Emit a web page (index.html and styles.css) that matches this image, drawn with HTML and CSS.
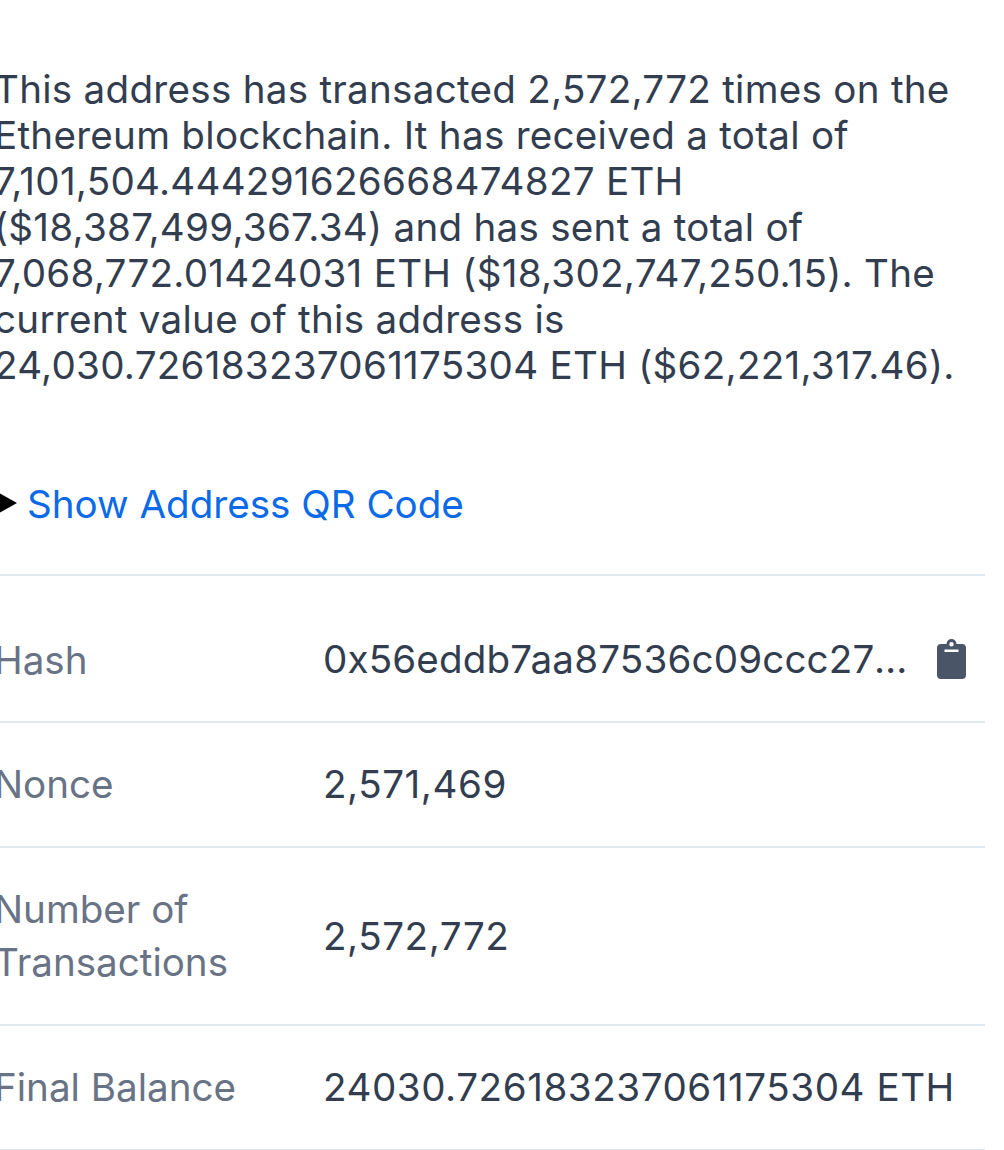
FILE: index.html
```html
<!DOCTYPE html>
<html lang="en">
<head>
    <meta charset="UTF-8">
    <title>Address</title>
    <link rel="stylesheet" href="styles.css">
</head>
<body>
    <div class="wrap">
        <p class="summary">This address has transacted 2,572,772 times on the Ethereum blockchain. It has received a total of 7,101,504.444291626668474827 ETH ($18,387,499,367.34) and has sent a total of 7,068,772.01424031 ETH ($18,302,747,250.15). The current value of this address is 24,030.726183237061175304 ETH ($62,221,317.46).</p>
        <details class="qr">
            <summary><span class="qr-link">Show Address QR Code</span></summary>
        </details>
        <div class="rows">
            <div class="row row-hash">
                <div class="label">Hash</div>
                <div class="value hash">
                    <span class="hash-text">0x56eddb7aa87536c09ccc2793473599fd21a8b17f</span>
                    <svg class="clip" viewBox="0 0 29 40"><path fill-rule="evenodd" d="M14.500 0a5 5 0 0 1 5 5h5.500a4 4 0 0 1 4 4v27a4 4 0 0 1-4 4H4a4 4 0 0 1-4-4V9a4 4 0 0 1 4-4h5.500a5 5 0 0 1 5-5zm0 3a2.200 2.200 0 1 0 0 4.400 2.200 2.200 0 0 0 0-4.400zM7.500 10.500V13h14v-2.500z"/></svg>
                </div>
            </div>
            <div class="row">
                <div class="label">Nonce</div>
                <div class="value num">2,571,469</div>
            </div>
            <div class="row">
                <div class="label">Number of Transactions</div>
                <div class="value num">2,572,772</div>
            </div>
            <div class="row">
                <div class="label">Final Balance</div>
                <div class="value num">24030.726183237061175304 ETH</div>
            </div>
        </div>
    </div>
</body>
</html>
```
FILE: styles.css
```css
html, body {
    margin: 0;
    padding: 0;
    background: #fff;
    overflow-x: hidden;
}
body {
    font-family: Inter, "Liberation Sans", sans-serif;
    color: #323e50;
    font-size: 38.6px;
}
.wrap {
    margin-left: -6px;
    width: 991px;
    padding-top: 66px;
}
.summary {
    margin: 0;
    line-height: 46px;
    letter-spacing: .27px;
}
.num {
    letter-spacing: .55px;
}
.qr {
    margin-top: 93px;
    line-height: 46px;
    padding-bottom: 47px;
    border-bottom: 2px solid #e2e8f0;
}
.qr summary {
    display: flex;
    align-items: center;
    gap: 10px;
    list-style: none;
}
.qr summary::before {
    content: "";
    border-left: 23px solid #000;
    border-top: 13px solid transparent;
    border-bottom: 13px solid transparent;
    margin-top: -3px;
}
.qr-link {
    color: #0b6ae8;
}
.row {
    display: flex;
    align-items: center;
    border-bottom: 2px solid #e2e8f0;
    padding: 35.25px 0;
    line-height: 52.5px;
}
.row-hash {
    padding-top: 55.25px;
    padding-bottom: 34.25px;
}
.row-hash .label {
    padding-top: 3px;
}
.label {
    width: 329px;
    flex: none;
    color: #697386;
    padding-right: 40px;
    box-sizing: border-box;
}
.value {
    flex: 1;
    min-width: 0;
}
.hash {
    display: flex;
    align-items: center;
}
.hash-text {
    flex: 1;
    min-width: 0;
    overflow: hidden;
    white-space: nowrap;
    text-overflow: ellipsis;
    letter-spacing: .15px;
}
.clip {
    width: 29px;
    height: 40px;
    margin: 0 19px 0 28px;
    fill: #4a5568;
    flex: none;
}
```
